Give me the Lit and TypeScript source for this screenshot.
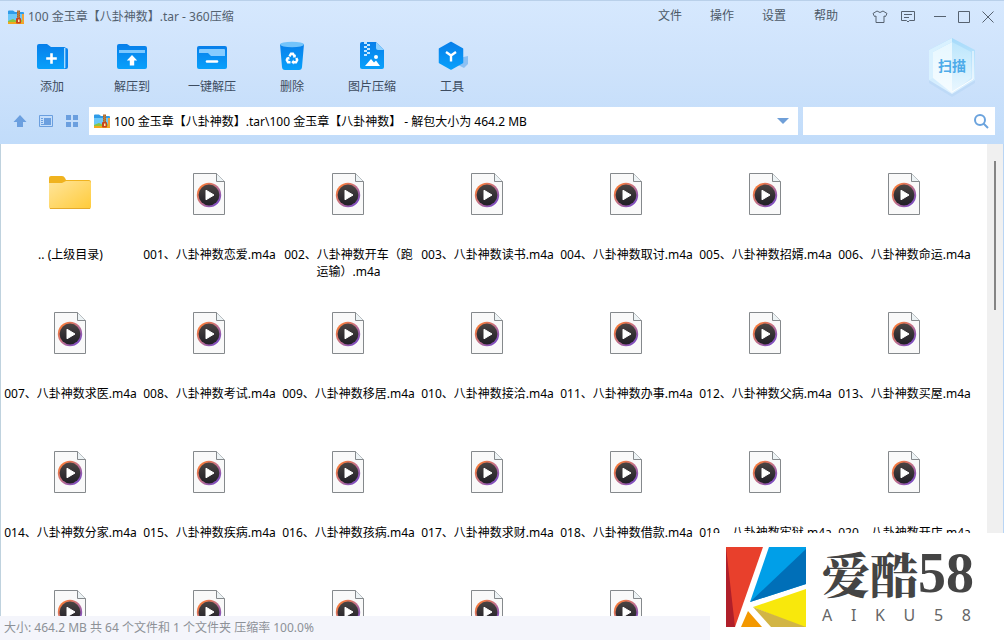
import { LitElement, html, css, svg, nothing } from "lit";
import { customElement, property } from "lit/decorators.js";

const FONT = css`"Noto Sans", "Noto Sans CJK SC", sans-serif`;

@customElement("media-icon")
class MediaIcon extends LitElement {
  static styles = css`
    :host { display: block; width: 36px; height: 44px; }
    svg { display: block; }
  `;
  render() {
    return html`<svg width="34" height="44" viewBox="0 0 34 44" aria-hidden="true">
      <defs>
        <linearGradient id="ring" x1="0" y1="0" x2="1" y2="1">
          <stop offset="0.15" stop-color="#f5793a" /><stop offset="0.5" stop-color="#c0708a" /><stop offset="0.9" stop-color="#7448c8" />
        </linearGradient>
        <linearGradient id="disc" x1="0" y1="0" x2="0" y2="1">
          <stop offset="0" stop-color="#4a4443" /><stop offset="1" stop-color="#201f26" />
        </linearGradient>
      </defs>
      <path d="M1.5 1.5H24.5L32.5 9.5V42.5H1.5Z" fill="#f9f9f9" stroke="#85898c" />
      <path d="M24.5 1.5V9.5H32.5" fill="#edf3f5" stroke="#85898c" />
      <circle cx="17" cy="23" r="12.2" fill="url(#ring)" />
      <circle cx="17" cy="23" r="10.4" fill="url(#disc)" />
      <path d="M14 18.2V27.8L22 23Z" fill="#fff" stroke="#fff" stroke-linejoin="round" />
    </svg>`;
  }
}

@customElement("folder-icon")
class FolderIcon extends LitElement {
  static styles = css`
    :host { display: block; width: 46px; height: 44px; }
    svg { display: block; }
  `;
  render() {
    return html`<svg width="44" height="44" viewBox="0 0 44 44" aria-hidden="true">
      <defs><linearGradient id="front" x1="0" y1="0" x2="1" y2="1">
        <stop offset="0" stop-color="#ffe59b" /><stop offset="1" stop-color="#ffcb3a" />
      </linearGradient></defs>
      <path d="M1 6Q1 4 3 4H14Q16 4 17 6L18 8H41Q43 8 43 10V16H1Z" fill="#f0b31f" />
      <path d="M1 11H14L18 9H41Q43 9 43 11V35Q43 37 41 37H3Q1 37 1 35Z" fill="url(#front)" />
      <path d="M2 36.5H42" stroke="#e5aa2c" />
    </svg>`;
  }
}

@customElement("archive-icon")
class ArchiveIcon extends LitElement {
  static styles = css`
    :host { display: block; width: 16px; height: 14px; }
    svg { display: block; }
  `;
  render() {
    return html`<svg width="16" height="14" viewBox="0 0 16 14" aria-hidden="true">
      <path d="M0 1.5Q0 0.5 1 0.5H5L7 2H15Q16 2 16 3V11H0Z" fill="#2f9be8" />
      <path d="M0 4H16V11H0Z" fill="#6cc8f8" />
      <path d="M0 11L5 9L9 11L16 9V14H0Z" fill="#8cc63f" />
      <path d="M0 12H16V14H0Z" fill="#f3a71d" />
      <path d="M9 0.5H12V9H9Z" fill="#a8642a" />
      <path d="M10 1V8M11 2V8" stroke="#e0b070" stroke-width="0.6" stroke-dasharray="1 1" />
      <rect x="8" y="8" width="5" height="5.5" rx="1" fill="#c8431c" />
      <rect x="10" y="9.5" width="1.5" height="2.5" fill="#ffe9b0" />
      <rect x="14" y="4" width="2" height="9" fill="#f0a23a" />
    </svg>`;
  }
}

const toolIcons: Record<string, unknown> = {
  add: svg`<path d="M1 5Q1 3 3 3H11L15 6H28Q30 6 30 8V26Q30 28 28 28H3Q1 28 1 26Z" fill="url(#blue)"/>
    <path d="M29 7H30Q32 7 32 9V26Q32 28 30 28H29Z" fill="#0a84ee"/><path d="M28.7 7V27" stroke="#a8dcff" stroke-width="1.4"/>
    <path d="M15.5 12.2V22.8M10.2 17.5H20.8" stroke="#fff" stroke-width="2.6"/>`,
  extract: svg`<path d="M1 5Q1 3 3 3H11L14 5H29Q31 5 31 7V26Q31 28 29 28H3Q1 28 1 26Z" fill="url(#blue)"/>
    <path d="M3 9H29V12H3Z" fill="#7cc8ff"/>
    <path d="M16 14L21.2 19.500H18.200V24.500H13.800V19.500H10.800Z" fill="#fff"/>`,
  quick: svg`<rect x="1" y="5" width="30" height="23" rx="2" fill="url(#blue)"/>
    <path d="M3 9Q3 8 4 8H28Q29 8 29 9V15H15L12 12H3Z" fill="#86ccff"/>
    <path d="M11 20.500H21" stroke="#fff" stroke-width="2.600" stroke-linecap="round"/>`,
  remove: svg`<path d="M4 3H28L26 26Q25.800 29 23 29H9Q6.200 29 6 26Z" fill="url(#blue)"/>
    <ellipse cx="16" cy="3.500" rx="12" ry="2.700" fill="#74c4fb"/>
    <g fill="none" stroke="#fff" stroke-width="2.400"><path d="M13.500 15.300L15 12.800H17L18.500 15.300"/><path d="M20.300 17L21.200 19L20 21.200H17"/><path d="M14.500 21.200H12L10.800 19L12 16.800"/></g>
    <path d="M19.800 13.200V16.500H16.700ZM17.600 18.600V23.600L15.300 21.200ZM9.700 17.200L13.200 15.500L13.600 18.700Z" fill="#fff"/>`,
  image: svg`<path d="M4 3Q4 1 6 1H20L28 9V26Q28 28 26 28H6Q4 28 4 26Z" fill="url(#blue)"/>
    <path d="M20 1L28 9H22Q20 9 20 7Z" fill="#8dd0ff"/>
    <path d="M8 1h3v2h-3zM11 3h3v2h-3zM8 5h3v2h-3zM11 7h3v2h-3zM8 9h3v2h-3zM11 11h3v2h-3zM8 13h3v2h-3z" fill="#c2e6ff"/>
    <path d="M9 25L15 18L18 21.500L20 19.500L24 25Z" fill="#fff"/><circle cx="20" cy="16" r="2" fill="#fff"/>`,
  tools: svg`<path d="M23 17L32 15V23L28 27L22 24Z" fill="#8cc0f3"/>
    <path d="M15 1.500L26.500 8V21.500L15 28L3.500 21.500V8Z" fill="url(#blue)" stroke="url(#blue)" stroke-width="1.500" stroke-linejoin="round"/>
    <path d="M10 11L15 14.500L20 11M15 14.500V20.500" fill="none" stroke="#fff" stroke-width="2.400"/>`,
};

@customElement("tool-button")
class ToolButton extends LitElement {
  @property() icon = "";
  @property() label = "";
  static styles = css`
    :host { display: block; width: 80px; }
    button {
      display: flex; flex-direction: column; align-items: center; gap: 5px;
      width: 100%; padding: 0; border: 0; background: none;
      font: 12px/18px ${FONT}; color: #3d4c60; white-space: nowrap;
    }
    svg { display: block; overflow: visible; }
  `;
  render() {
    return html`<button type="button">
      <svg width="32" height="32" viewBox="0 0 32 32" aria-hidden="true">
        <defs><linearGradient id="blue" x1="0" y1="0" x2="0" y2="1">
          <stop offset="0" stop-color="#087fea" /><stop offset="1" stop-color="#08a0fb" />
        </linearGradient></defs>
        ${toolIcons[this.icon]}
      </svg>
      <span>${this.label}</span>
    </button>`;
  }
}

const tools = [
  ["add", "添加"], ["extract", "解压到"], ["quick", "一键解压"],
  ["remove", "删除"], ["image", "图片压缩"], ["tools", "工具"],
];
const topics = [
  "恋爱", "开车（跑运输）", "读书", "取讨", "招婿", "命运", "求医", "考试", "移居", "接洽",
  "办事", "父病", "买屋", "分家", "疾病", "孩病", "求财", "借款", "牢狱", "开店",
];
const files = topics.map((t, i) => `${String(i + 1).padStart(3, "0")}、八卦神数${t}.m4a`);
const trailing = [21, 22, 23, 24, 25];

@customElement("app-root")
class AppRoot extends LitElement {
  static styles = css`
    * { box-sizing: border-box; }
    :host {
      display: flex; flex-direction: column; position: relative; height: 100vh; overflow: hidden;
      font: 12px/17px ${FONT}; color: #000; background: #fff;
    }
    button { padding: 0; border: 0; background: none; font: inherit; color: inherit; display: grid; place-items: center; }
    svg { display: block; }
    .head { background: linear-gradient(#d6e8fe, #cde2fb 50%, #c1dcfa); border-top: 1px solid #b9d0ea; }
    .titlebar { display: flex; align-items: center; height: 31px; padding: 0 4px 0 8px; color: #53616f; }
    .title { flex: 1; display: flex; align-items: center; gap: 4px; margin: 0; font: inherit; white-space: nowrap; }
    .menu { display: flex; color: #4c5966; padding-bottom: 2px; }
    .menu button { width: 52px; height: 24px; }
    .glyphs { display: flex; margin: 0 6px 0 14px; color: #566270; }
    .glyphs button { width: 28px; height: 24px; }
    .window { display: flex; color: #566270; }
    .window button { width: 24px; height: 24px; }
    .toolbar { display: flex; align-items: flex-start; height: 68px; padding: 9px 24px 0 12px; }
    .scan { margin: -4px 0 0 auto; }
    .scan text { font: bold 14px ${FONT}; fill: #4dabe9; }
    .address { display: flex; align-items: center; height: 44px; padding: 0 9px 2px 7px; }
    .address > button { width: 26px; height: 28px; }
    .path { position: relative; flex: 1; margin: 0 5px 0 4px; }
    .path select {
      width: 100%; height: 28px; padding: 0 30px 0 25px; appearance: none; border: 0; border-radius: 0;
      background: #fff; font: inherit; color: #000; display: block;
    }
    .path archive-icon { position: absolute; left: 5px; top: 7px; }
    .arrow { position: absolute; right: 9px; top: 11px; }
    .search { display: flex; align-items: center; width: 192px; height: 28px; background: #fff; }
    .search input { flex: 1; min-width: 0; height: 28px; border: 0; padding: 0 8px; outline: 0; background: none; font: inherit; }
    .search button { width: 28px; height: 28px; }
    .main { flex: 1; min-height: 0; display: flex; border-left: 1px solid #bfd2de; border-right: 1px solid #b9d5f5; }
    .files {
      flex: 1; margin: 0; padding: 0; list-style: none; overflow: hidden;
      display: grid; grid-template-columns: repeat(auto-fill, 139px); grid-auto-rows: 139px; align-content: start;
    }
    .file { display: flex; flex-direction: column; align-items: center; gap: 30px; padding: 28px 1px 0; text-align: center; }
    .name { width: 100%; }
    .track { width: 16px; padding: 17px 7px 0; background: #f0f0f0; }
    .thumb { width: 2px; height: 149px; background: #858585; }
    .status { height: 24px; padding: 3px 4px 0; background: #f4f5fb; color: #8d9197; line-height: 18px; }
    .brand {
      position: absolute; right: 0; bottom: 0; width: 294px; height: 107px; background: #fff;
      display: flex; align-items: flex-start; gap: 16px; padding: 14px 0 0 16px;
    }
    .words { width: 152px; color: #444; }
    .big { display: flex; align-items: center; height: 52px; font: 900 48px/52px "Noto Serif CJK SC", "Noto Sans CJK SC", serif; }
    .num { font: bold 56px/52px "Liberation Serif", serif; }
    .small { display: flex; justify-content: space-between; padding: 7px 3px 0 0; font-size: 16px; line-height: 18px; color: #666; }
  `;

  render() {
    return html`
      <header class="head">
        <div class="titlebar">
          <h1 class="title"><archive-icon></archive-icon>100 金玉章【八卦神数】.tar - 360压缩</h1>
          <nav class="menu">${["文件", "操作", "设置", "帮助"].map((m) => html`<button type="button">${m}</button>`)}</nav>
          <div class="glyphs">
            <button type="button" aria-label="皮肤"><svg width="16" height="14" viewBox="0 0 16 14" fill="none" stroke="currentColor"><path d="M5 1L1 3.500L2.500 6.500L4 6V12.500H12V6L13.500 6.500L15 3.500L11 1Q8 4 5 1Z" /></svg></button>
            <button type="button" aria-label="反馈"><svg width="14" height="14" viewBox="0 0 14 14" fill="none" stroke="currentColor"><path d="M0.500 1.500H13.500V10.500H8.500L7 12L5.500 10.500H0.500ZM3 4.500H11M3 7.500H8" /></svg></button>
          </div>
          <div class="window">
            <button type="button" aria-label="最小化"><svg width="12" height="12" stroke="currentColor"><path d="M0 5.500H12" /></svg></button>
            <button type="button" aria-label="最大化"><svg width="12" height="12" fill="none" stroke="currentColor"><path d="M0.500 0.500H11.500V11.500H0.500Z" /></svg></button>
            <button type="button" aria-label="关闭"><svg width="12" height="12" stroke="currentColor"><path d="M0.500 0.500L11.500 11.500M11.500 0.500L0.500 11.500" /></svg></button>
          </div>
        </div>
        <div class="toolbar">
          ${tools.map(([icon, label]) => html`<tool-button icon=${icon} label=${label}></tool-button>`)}
          <button class="scan" type="button">
            <svg width="56" height="64" viewBox="0 0 56 64">
              <defs>
                <linearGradient id="outer" x1="0" y1="0" x2="0" y2="1"><stop offset="0" stop-color="#a5dafa" /><stop offset="1" stop-color="#e2f3ff" /></linearGradient>
                <linearGradient id="left" x1="0" y1="0" x2="0" y2="1"><stop offset="0" stop-color="#e6f7ff" /><stop offset="1" stop-color="#f6fcff" /></linearGradient>
                <linearGradient id="right" x1="0" y1="0" x2="0" y2="1"><stop offset="0" stop-color="#bce6fc" /><stop offset="1" stop-color="#eaf7ff" /></linearGradient>
              </defs>
              <path d="M28 5L51 17V46L28 60L5 46V17Z" fill="#a9cdf2" opacity="0.35" />
              <path d="M28 1L51 13V43L28 57L5 43V13Z" fill="url(#outer)" />
              <path d="M28 1L5 13V43L9 41V15L28 5Z" fill="#d9f1ff" />
              <path d="M28 5L9 15V41L28 56Z" fill="url(#left)" />
              <path d="M28 5L47 15V41L28 56Z" fill="url(#right)" />
              <path d="M49 14V42L28 55" fill="none" stroke="#fff" />
              <text x="28" y="34" text-anchor="middle">扫描</text>
            </svg>
          </button>
        </div>
        <div class="address">
          <button type="button" aria-label="向上"><svg width="14" height="14" fill="#6b9fdf"><path d="M7 1L13.500 8H10V13H4V8H0.500Z" /></svg></button>
          <button type="button" aria-label="详情"><svg width="14" height="12" fill="none" stroke="#6b9fdf"><path d="M0.500 0.500H13.500V11.500H0.500Z" /><path d="M5 3H11V9H5Z" fill="#6b9fdf" stroke="none" /><path d="M2 3.500H4M2 5.500H4M2 7.500H4M2 9.500H12M11.500 3V9" /></svg></button>
          <button type="button" aria-label="图标"><svg width="12" height="12" fill="#6b9fdf"><path d="M0 0H5V5H0ZM7 0H12V5H7ZM0 7H5V12H0ZM7 7H12V12H7Z" /></svg></button>
          <div class="path">
            <select aria-label="路径"><option>100 金玉章【八卦神数】.tar\\100 金玉章【八卦神数】 - 解包大小为 464.2 MB</option></select>
            <archive-icon></archive-icon>
            <svg class="arrow" width="12" height="6" fill="#6f9fd8"><path d="M0 0H12L6 6Z" /></svg>
          </div>
          <div class="search">
            <input type="text" aria-label="搜索" />
            <button type="button" aria-label="搜索"><svg width="16" height="16" fill="none" stroke="#6ba3dd" stroke-width="2"><circle cx="7" cy="7" r="5" /><path d="M10.500 10.500L15 15" /></svg></button>
          </div>
        </div>
      </header>
      <main class="main">
        <ul class="files">
          <li class="file"><folder-icon></folder-icon><span class="name">.. (上级目录)</span></li>
          ${files.map((f) => html`<li class="file"><media-icon></media-icon><span class="name">${f}</span></li>`)}
          ${trailing.map(() => html`<li class="file"><media-icon></media-icon>${nothing}</li>`)}
        </ul>
        <div class="track"><div class="thumb"></div></div>
      </main>
      <footer class="status">大小: 464.2 MB 共 64 个文件和 1 个文件夹 压缩率 100.0%</footer>
      <aside class="brand">
        <svg width="80" height="80" viewBox="0 0 80 80" aria-hidden="true">
          <path d="M0 0H37L9 80H0Z" fill="#e8402c" /><path d="M0 0L9 80H0Z" fill="#b01f2a" />
          <path d="M43 0H80V37L24 55Z" fill="#009fe8" /><path d="M80 2V37L24 55Z" fill="#006fb8" />
          <path d="M80 42V80H76L27 60Z" fill="#f8e80c" /><path d="M27 60L80 80H45Z" fill="#d2b545" />
          <path d="M22 64L36 80H15Z" fill="#f39800" />
        </svg>
        <div class="words">
          <div class="big">爱酷<span class="num">58</span></div>
          <div class="small">${[..."AIKU58"].map((c) => html`<span>${c}</span>`)}</div>
        </div>
      </aside>
    `;
  }
}
